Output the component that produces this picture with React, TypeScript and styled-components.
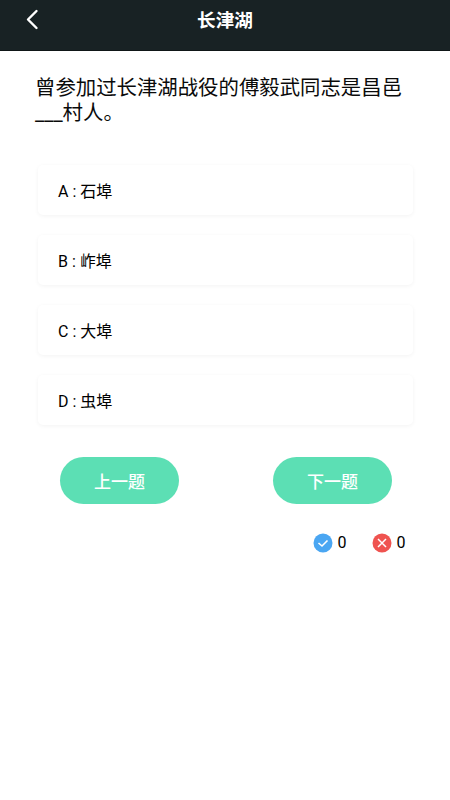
import React from "react";
import styled, { createGlobalStyle } from "styled-components";

const Global = createGlobalStyle`
  html, body { margin: 0; padding: 0; background: #fff; }
  body { font-family: Roboto, "Noto Sans CJK SC", sans-serif; }
`;
const Page = styled.div`
  width: 450px;
  height: 800px;
  overflow: hidden;
  background: #fff;
`;
const Header = styled.header`
  height: 50px;
  background: #182224;
  border-bottom: 1px solid #0f1617;
  display: grid;
  grid-template-columns: 64px 1fr 64px;
  align-items: start;
`;
const BackIcon = styled.svg`
  display: block;
  margin: 8px 0 0 24px;
  width: 16px;
  height: 22px;
`;
const Title = styled.h1`
  margin: 8px 0 0;
  color: #fff;
  font-size: 18.6px;
  line-height: 26px;
  font-weight: 700;
  text-align: center;
`;
const Question = styled.p`
  margin: 0;
  padding: 25px 36px 0 35px;
  font-size: 20.4px;
  line-height: 25px;
  color: #0a0a0a;
  height: 74px;
  box-sizing: content-box;
`;
const Options = styled.div`
  margin-top: 15px;
  padding: 0 37px 0 38px;
  display: flex;
  flex-direction: column;
  gap: 20px;
`;
const Option = styled.div`
  height: 50px;
  padding-left: 20px;
  display: flex;
  align-items: center;
  background: #fff;
  border-radius: 5px;
  box-shadow: 0 1px 4px rgba(0, 0, 0, 0.05);
  font-size: 16px;
  color: #000;
`;
const Buttons = styled.div`
  margin-top: 32px;
  padding: 0 58px 0 60px;
  display: flex;
  justify-content: space-between;
`;
const Btn = styled.button`
  width: 119px;
  height: 47px;
  border: none;
  border-radius: 24px;
  background: #5cdfb4;
  color: #fff;
  font-family: inherit;
  font-size: 17px;
  font-weight: 500;
  padding: 0 0 1px;
`;
const Score = styled.div`
  margin-top: 29px;
  padding-right: 44.5px;
  display: flex;
  justify-content: flex-end;
  gap: 25px;
`;
const ScoreItem = styled.div`
  display: flex;
  align-items: center;
  gap: 5px;
  font-size: 16px;
  line-height: 20px;
  color: #000;
`;

const Badge = ({ color, children }: { color: string; children: React.ReactNode }) => (
  <svg width="20" height="20" viewBox="0 0 20 20">
    <circle cx="10" cy="10" r="9.5" fill={color} />
    {children}
  </svg>
);

export default function App() {
  return (
    <Page>
      <Global />
      <Header>
        <BackIcon viewBox="0 0 16 22">
          <path d="M12.5 3 L4 11.5 L12.5 20" fill="none" stroke="#fff" strokeWidth="2.4" strokeLinecap="round" strokeLinejoin="round" />
        </BackIcon>
        <Title>长津湖</Title>
      </Header>
      <Question>曾参加过长津湖战役的傅毅武同志是昌邑___村人。</Question>
      <Options>
        <Option>A : 石埠</Option>
        <Option>B : 岞埠</Option>
        <Option>C : 大埠</Option>
        <Option>D : 虫埠</Option>
      </Options>
      <Buttons>
        <Btn>上一题</Btn>
        <Btn>下一题</Btn>
      </Buttons>
      <Score>
        <ScoreItem>
          <Badge color="#4aa6f2">
            <path d="M5.5 10 L9 13 L14.5 7.5" fill="none" stroke="#fff" strokeWidth="1.6" />
          </Badge>
          0
        </ScoreItem>
        <ScoreItem>
          <Badge color="#ef5350">
            <path d="M6 6 L14 14 M14 6 L6 14" fill="none" stroke="#fff" strokeWidth="1.5" />
          </Badge>
          0
        </ScoreItem>
      </Score>
    </Page>
  );
}
